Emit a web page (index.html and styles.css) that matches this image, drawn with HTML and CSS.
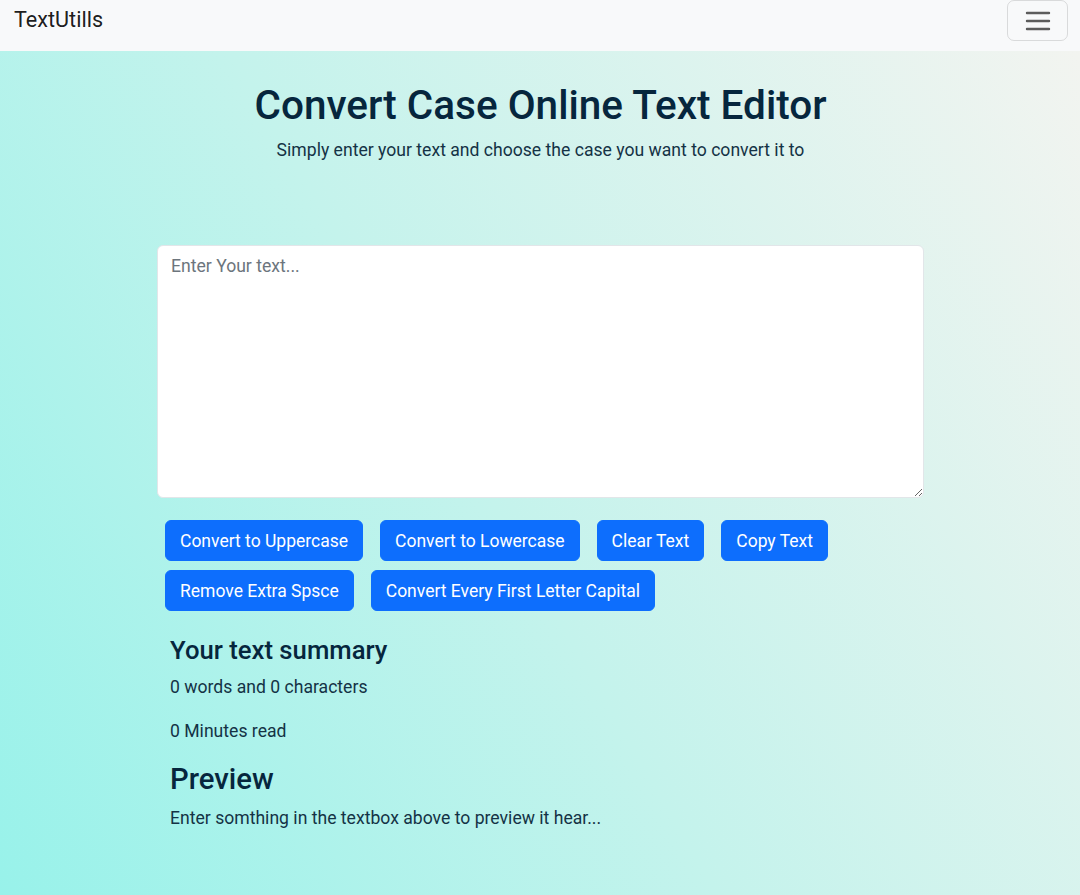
FILE: index.html
```html
<!DOCTYPE html>
<html lang="en">
<head>
<meta charset="utf-8">
<title>TextUtills</title>
<link rel="stylesheet" href="styles.css">
</head>
<body>
<nav class="navbar">
  <a class="brand" href="#">TextUtills</a>
  <button class="toggler" aria-label="Toggle navigation">
    <svg width="30" height="30" viewBox="0 0 30 30"><path d="M4 7h22M4 15h22M4 23h22" stroke="#5c5c5c" stroke-width="2.4" stroke-linecap="round" fill="none"/></svg>
  </button>
</nav>
<main class="page">
  <header class="hero">
    <h1 class="title">Convert Case Online Text Editor</h1>
    <p class="subtitle">Simply enter your text and choose the case you want to convert it to</p>
  </header>
  <section class="editor">
    <textarea class="textbox" placeholder="Enter Your text..."></textarea>
    <div class="actions">
      <button class="btn">Convert to Uppercase</button>
      <button class="btn">Convert to Lowercase</button>
      <button class="btn">Clear Text</button>
      <button class="btn">Copy Text</button>
      <button class="btn">Remove Extra Spsce</button>
      <button class="btn">Convert Every First Letter Capital</button>
    </div>
  </section>
  <section class="summary">
    <h2 class="h-sum">Your text summary</h2>
    <p class="line">0 words and 0 characters</p>
    <p class="line">0 Minutes read</p>
    <h2 class="h-prev">Preview</h2>
    <p class="line">Enter somthing in the textbox above to preview it hear...</p>
  </section>
</main>
</body>
</html>
```
FILE: styles.css
```css
* { box-sizing: border-box; }
html, body { margin: 0; height: 100%; }
body {
  font-family: Roboto, "Liberation Sans", Arial, sans-serif;
  color: #0b2a3f;
  background: linear-gradient(60deg, #98f2ea 0%, #c4f3ec 45%, #f4f4f0 100%);
  min-height: 895px;
  overflow: hidden;
}
.navbar {
  height: 51px;
  background: #f8f9fa;
  display: flex;
  align-items: flex-start;
  justify-content: space-between;
  padding: 0 12px 0 14px;
}
.brand {
  font-size: 21.6px;
  line-height: 40px;
  color: rgba(0,0,0,.9);
  text-decoration: none;
}
.toggler {
  width: 61px;
  height: 41px;
  background: transparent;
  border: 1px solid rgba(0,0,0,.12);
  border-radius: 7px;
  display: flex;
  align-items: center;
  justify-content: center;
  padding: 0;
}
.toggler svg { display: block; }
.page { padding: 0 156px 0 157px; }
.hero { text-align: center; padding-top: 28px; }
.title {
  margin: 0;
  font-size: 40.5px;
  font-weight: 500;
  line-height: 52px;
  color: #06263d;
}
.subtitle {
  margin: 6px 0 0;
  font-size: 17.6px;
  line-height: 26px;
  color: #143245;
}
.editor { margin-top: 82px; }
.textbox {
  display: block;
  width: 767px;
  height: 253px;
  border: 1px solid #e2e6e9;
  border-radius: 6px;
  background: #fff;
  padding: 7px 13px;
  font-family: inherit;
  font-size: 17.6px;
  line-height: 27px;
  color: #212529;
  resize: vertical;
}
.textbox::placeholder { color: #6c757d; }
.actions {
  display: flex;
  flex-wrap: wrap;
  gap: 9px 17px;
  margin-top: 22px;
  padding-left: 8px;
  width: 690px;
}
.btn {
  height: 41px;
  padding: 0 14px;
  border: 1px solid #0d6efd;
  background: #0d6efd;
  color: #fff;
  border-radius: 6px;
  font-family: inherit;
  font-size: 17.5px;
  line-height: 40px;
}
.summary { padding-left: 13px; margin-top: 23px; }
.h-sum {
  margin: 0;
  font-size: 25.7px;
  font-weight: 500;
  line-height: 32px;
  color: #06263d;
}
.line {
  margin: 8px 0 0;
  font-size: 17.6px;
  line-height: 27px;
  color: #143245;
}
.line + .line { margin-top: 17px; }
.h-prev {
  margin: 16px 0 0;
  font-size: 29.3px;
  font-weight: 500;
  line-height: 36px;
  color: #06263d;
}
.h-prev + .line { margin-top: 8px; }
```
